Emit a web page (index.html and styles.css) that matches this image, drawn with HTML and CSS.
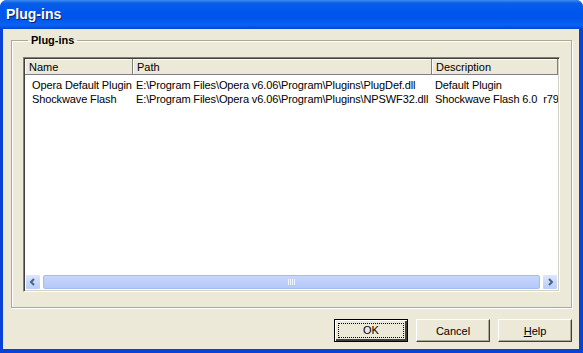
FILE: index.html
```html
<!DOCTYPE html>
<html lang="en">

<head>
    <meta charset="UTF-8">
    <title>Plug-ins</title>
    <link rel="stylesheet" href="styles.css">
</head>

<body>

    <div class="window">
        <div class="titlebar">Plug-ins</div>

        <div class="client">
            <fieldset class="group">
                <legend>Plug-ins</legend>

                <div class="listview">
                    <div class="list-head">
                        <div class="col-head">Name</div>
                        <div class="col-head">Path</div>
                        <div class="col-head">Description</div>
                    </div>

                    <div class="list-rows">
                        <div class="list-row">
                            <span>Opera Default Plugin</span>
                            <span>E:\Program Files\Opera v6.06\Program\Plugins\PlugDef.dll</span>
                            <span>Default Plugin</span>
                        </div>
                        <div class="list-row">
                            <span>Shockwave Flash</span>
                            <span>E:\Program Files\Opera v6.06\Program\Plugins\NPSWF32.dll</span>
                            <span>Shockwave Flash 6.0 &nbsp;r79</span>
                        </div>
                    </div>

                    <div class="hscroll">
                        <div class="sb-btn">
                            <svg width="8" height="8" viewBox="0 0 8 8"><path d="M5 1 L2 4 L5 7" fill="none" stroke="#4d6185" stroke-width="2"/></svg>
                        </div>
                        <div class="sb-track">
                            <div class="sb-thumb">
                                <svg width="8" height="6" viewBox="0 0 8 6"><path d="M0.5 0v6M2.5 0v6M4.5 0v6M6.5 0v6" stroke="#eef4fe" stroke-width="1"/></svg>
                            </div>
                        </div>
                        <div class="sb-btn">
                            <svg width="8" height="8" viewBox="0 0 8 8"><path d="M3 1 L6 4 L3 7" fill="none" stroke="#4d6185" stroke-width="2"/></svg>
                        </div>
                    </div>
                </div>
            </fieldset>

            <div class="buttons">
                <button type="button" class="btn default"><span class="focus">OK</span></button>
                <button type="button" class="btn">Cancel</button>
                <button type="button" class="btn"><u>H</u>elp</button>
            </div>
        </div>
    </div>

</body>

</html>
```

FILE: styles.css
```css
body {
    margin: 0;
    padding: 0;
    background-color: #fff;
    font-family: 'Liberation Sans', Arial, sans-serif;
    font-size: 11px;
    color: #000;
}

.window {
    width: 583px;
    height: 353px;
    background-color: #0842d6;
    border-radius: 7px 7px 0 0;
    display: flex;
    flex-direction: column;
    overflow: hidden;
}

.titlebar {
    height: 29px;
    flex-shrink: 0;
    box-sizing: border-box;
    padding: 6px 0 0 6px;
    background: linear-gradient(to bottom, #3d8cf5 0, #0b5fe6 3px, #0058ee 9px, #0054ea 18px, #0a62f4 25px, #0047d4 29px);
    color: #fff;
    font-weight: bold;
    font-size: 14px;
    text-shadow: 1px 1px 0 #0a1e6e;
}

.client {
    flex: 1;
    margin: 0 4px 4px 3px;
    background-color: #ece9d8;
    padding: 5px 7px 0 8px;
    display: flex;
    flex-direction: column;
}

.group {
    margin: 0;
    min-width: 0;
    padding: 11px 11px 11px 11px;
    border: 1px solid #aca899;
    box-shadow: 1px 1px 0 #fff, inset 1px 1px 0 #fff;
    height: 274px;
    box-sizing: border-box;
}

.group legend {
    padding: 0 3px;
    margin-left: 5px;
    font-weight: bold;
    font-size: 11px;
}

.listview {
    height: 235px;
    box-sizing: border-box;
    background-color: #fff;
    border: 1px solid;
    border-color: #7f7f7f #fff #fff #7f7f7f;
    box-shadow: inset 1px 1px 0 #404040, inset -1px -1px 0 #d4d0c8;
    padding: 1px;
    display: flex;
    flex-direction: column;
    overflow: hidden;
}

.list-head {
    display: grid;
    grid-template-columns: 108px 299px 1fr;
    height: 16px;
    flex-shrink: 0;
}

.col-head {
    background-color: #ece9d8;
    border-right: 1px solid #7f7f7f;
    border-bottom: 1px solid #7f7f7f;
    box-shadow: inset 1px 1px 0 #fff;
    padding: 2px 0 0 4px;
    line-height: 12px;
    white-space: nowrap;
}

.list-rows {
    flex: 1;
    padding-top: 3px;
}

.list-row {
    display: grid;
    grid-template-columns: 108px 299px 1fr;
    height: 14px;
    line-height: 14px;
    white-space: nowrap;
    letter-spacing: -0.12px;
}

.list-row span {
    padding-left: 7px;
    overflow: hidden;
}

.list-row span:nth-child(2),
.list-row span:nth-child(3) {
    padding-left: 3px;
}

.hscroll {
    height: 16px;
    flex-shrink: 0;
    display: flex;
    background-color: #fefefb;
}

.sb-btn {
    width: 16px;
    height: 16px;
    box-sizing: border-box;
    background: linear-gradient(to bottom, #dbe6fd, #b8cdf8);
    border: 1px solid #fff;
    border-radius: 2px;
    display: flex;
    align-items: center;
    justify-content: center;
}

.sb-track {
    flex: 1;
    padding: 1px 2px;
}

.sb-thumb {
    height: 14px;
    box-sizing: border-box;
    background: linear-gradient(to bottom, #c6d6fc, #b4c9f8);
    border: 1px solid #a3bbf1;
    border-radius: 2px;
    display: flex;
    align-items: center;
    justify-content: center;
}

.buttons {
    display: flex;
    justify-content: flex-end;
    gap: 8px;
    margin-top: 11px;
}

.btn {
    width: 74px;
    height: 23px;
    font-family: 'Liberation Sans', Arial, sans-serif;
    font-size: 11px;
    color: #000;
    background-color: #ece9d8;
    border: 1px solid;
    border-color: #fff #404040 #404040 #fff;
    box-shadow: inset -1px -1px 0 #aca899;
    padding: 0;
}

.btn.default {
    border: 1px solid #000;
    box-shadow: inset 1px 1px 0 #fff, inset -2px -2px 0 #404040;
}

.btn .focus {
    display: block;
    margin: 3px;
    height: 13px;
    line-height: 13px;
    border: 1px dotted #000;
}
```
